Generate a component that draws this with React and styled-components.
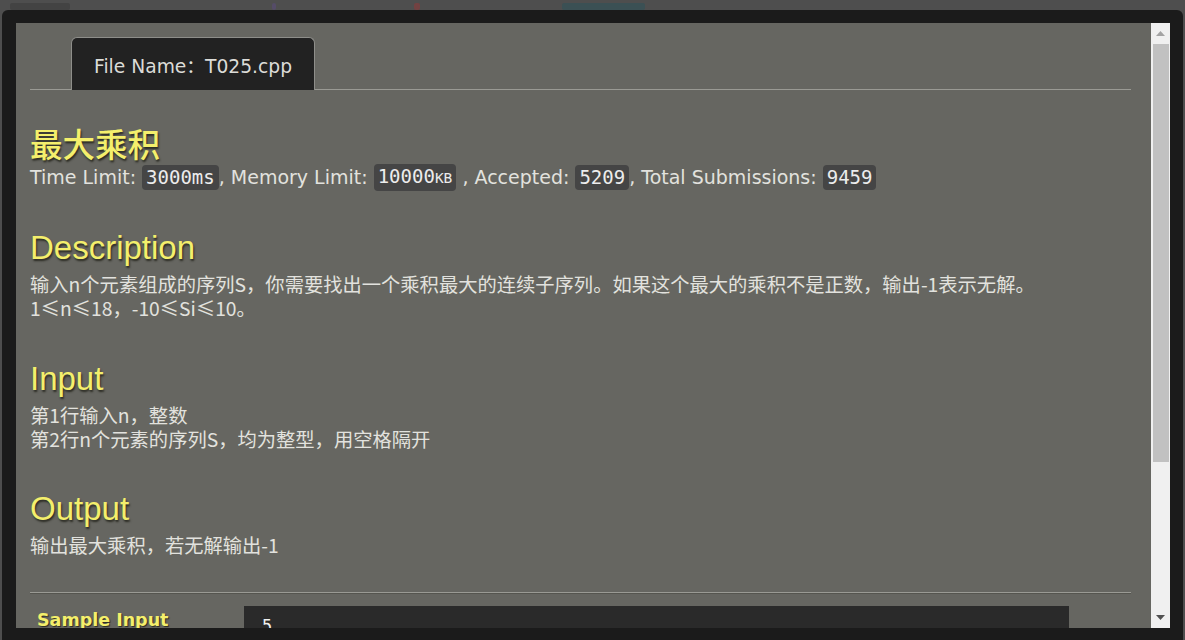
import React from 'react';
import styled, { createGlobalStyle } from 'styled-components';

const GlobalStyle = createGlobalStyle`
  html, body {
    margin: 0;
    padding: 0;
    height: 100%;
    background: #4e4e4e;
    overflow: hidden;
  }
  #root {
    height: 100%;
  }
`;

const Page = styled.div`
  height: 640px;
  display: flex;
  flex-direction: column;
`;

const TopStrip = styled.div`
  height: 10px;
  flex-shrink: 0;
  background: #4e4e4e;
  position: relative;
`;

const Blur = styled.span`
  position: absolute;
  top: 3px;
  height: 7px;
  border-radius: 2px;
  background: ${(p) => p.$color};
  opacity: 0.6;
`;

const Modal = styled.div`
  flex: 1;
  margin: 0 2px;
  background: #1b1b1b;
  border-radius: 6px 6px 0 0;
  padding: 13px 13px 12px 14px;
  display: flex;
  min-height: 0;
`;

const Body = styled.div`
  flex: 1;
  background: #666661;
  overflow: hidden;
  padding: 14px 20px 0 14px;
  color: #e2e2de;
  font-family: "DejaVu Sans", "Noto Sans CJK SC", sans-serif;
`;

const TabBar = styled.div`
  display: flex;
  padding-left: 41px;
  border-bottom: 1px solid #9a9a94;
`;

const Tab = styled.div`
  background: #222222;
  border: 1px solid #8e8e8a;
  border-bottom: none;
  border-radius: 6px 6px 0 0;
  padding: 0 22px;
  height: 52px;
  display: flex;
  align-items: center;
  font-size: 18.7px;
  color: #dcdcd8;
  margin-bottom: -1px;
`;

const Title = styled.h1`
  margin: 33px 0 0;
  font-family: "Noto Sans CJK SC", sans-serif;
  font-size: 32.5px;
  font-weight: 500;
  line-height: 40px;
  color: #f4ef6c;
  text-shadow: 1px 2px 2px #2a2a22;
`;

const Meta = styled.div`
  font-size: 19px;
  line-height: 28px;
  display: flex;
  align-items: center;
  white-space: pre;
`;

const Code = styled.span`
  background: #454545;
  border-radius: 4px;
  padding: 0 4px;
  font-family: "DejaVu Sans Mono", monospace;
  font-size: 19px;
  color: #ececec;
  line-height: 25px;
`;

const Small = styled.span`
  font-size: 14.5px;
`;

const Section = styled.section`
  margin-top: ${(p) => p.$top}px;
`;

const Heading = styled.h2`
  margin: 0 0 4px;
  font-family: "Liberation Sans", Arial, sans-serif;
  font-size: 33px;
  font-weight: 400;
  line-height: 40px;
  color: #f4ef6c;
  text-shadow: 1px 2px 2px #2a2a22;
`;

const Text = styled.p`
  margin: 0;
  font-family: "Noto Sans CJK SC", sans-serif;
  font-size: 19.3px;
  line-height: 24px;
  color: #e2e2de;
`;

const Divider = styled.hr`
  margin: 35px 0 0;
  border: none;
  border-top: 1px solid #9a9a94;
  border-bottom: 1px solid #55554f;
`;

const SampleRow = styled.div`
  display: flex;
  margin-top: 12px;
`;

const SampleLabel = styled.div`
  width: 207px;
  padding: 4px 0 0 7px;
  font-family: "DejaVu Sans", sans-serif;
  font-weight: bold;
  font-size: 17.5px;
  color: #f4ef6c;
  text-shadow: 1px 1px 1px #2a2a22;
`;

const SampleBox = styled.pre`
  margin: 0;
  width: 825px;
  height: 60px;
  background: #2a2a2a;
  padding: 10px 18px;
  box-sizing: border-box;
  font-family: "DejaVu Sans Mono", monospace;
  font-size: 17px;
  color: #f0f0f0;
`;

const Scrollbar = styled.div`
  width: 19px;
  background: #f0f0f0;
  display: flex;
  flex-direction: column;
  align-items: center;
`;

const Arrow = styled.div`
  height: 21px;
  width: 100%;
  display: flex;
  align-items: center;
  justify-content: center;
`;

const Thumb = styled.div`
  width: 16px;
  height: 418px;
  background: #c1c1c1;
`;

const Track = styled.div`
  flex: 1;
`;

export default function App() {
  return (
    <>
      <GlobalStyle />
      <Page>
        <TopStrip>
          <Blur $color="#3c3c3c" style={{ left: 10, width: 60 }} />
          <Blur $color="#5a4b7a" style={{ left: 272, width: 4 }} />
          <Blur $color="#8a3a3a" style={{ left: 414, width: 6 }} />
          <Blur $color="#2f5258" style={{ left: 562, width: 83 }} />
        </TopStrip>
        <Modal>
          <Body>
            <TabBar>
              <Tab>File Name：T025.cpp</Tab>
            </TabBar>
            <Title>最大乘积</Title>
            <Meta>
              Time Limit: <Code>3000ms</Code>, Memory Limit: <Code>10000<Small>KB</Small></Code> , Accepted: <Code>5209</Code>, Total Submissions: <Code>9459</Code>
            </Meta>
            <Section $top={37}>
              <Heading>Description</Heading>
              <Text>输入n个元素组成的序列S，你需要找出一个乘积最大的连续子序列。如果这个最大的乘积不是正数，输出-1表示无解。</Text>
              <Text>1≤n≤18，-10≤Si≤10。</Text>
            </Section>
            <Section $top={39}>
              <Heading>Input</Heading>
              <Text>第1行输入n，整数</Text>
              <Text>第2行n个元素的序列S，均为整型，用空格隔开</Text>
            </Section>
            <Section $top={38}>
              <Heading>Output</Heading>
              <Text>输出最大乘积，若无解输出-1</Text>
            </Section>
            <Divider />
            <SampleRow>
              <SampleLabel>Sample Input</SampleLabel>
              <SampleBox>5</SampleBox>
            </SampleRow>
          </Body>
          <Scrollbar>
            <Arrow>
              <svg width="9" height="5" viewBox="0 0 9 5"><path d="M0 5 L4.5 0 L9 5 Z" fill="#a3a3a3" /></svg>
            </Arrow>
            <Thumb />
            <Track />
            <Arrow>
              <svg width="9" height="5" viewBox="0 0 9 5"><path d="M0 0 L4.5 5 L9 0 Z" fill="#505050" /></svg>
            </Arrow>
          </Scrollbar>
        </Modal>
      </Page>
    </>
  );
}
